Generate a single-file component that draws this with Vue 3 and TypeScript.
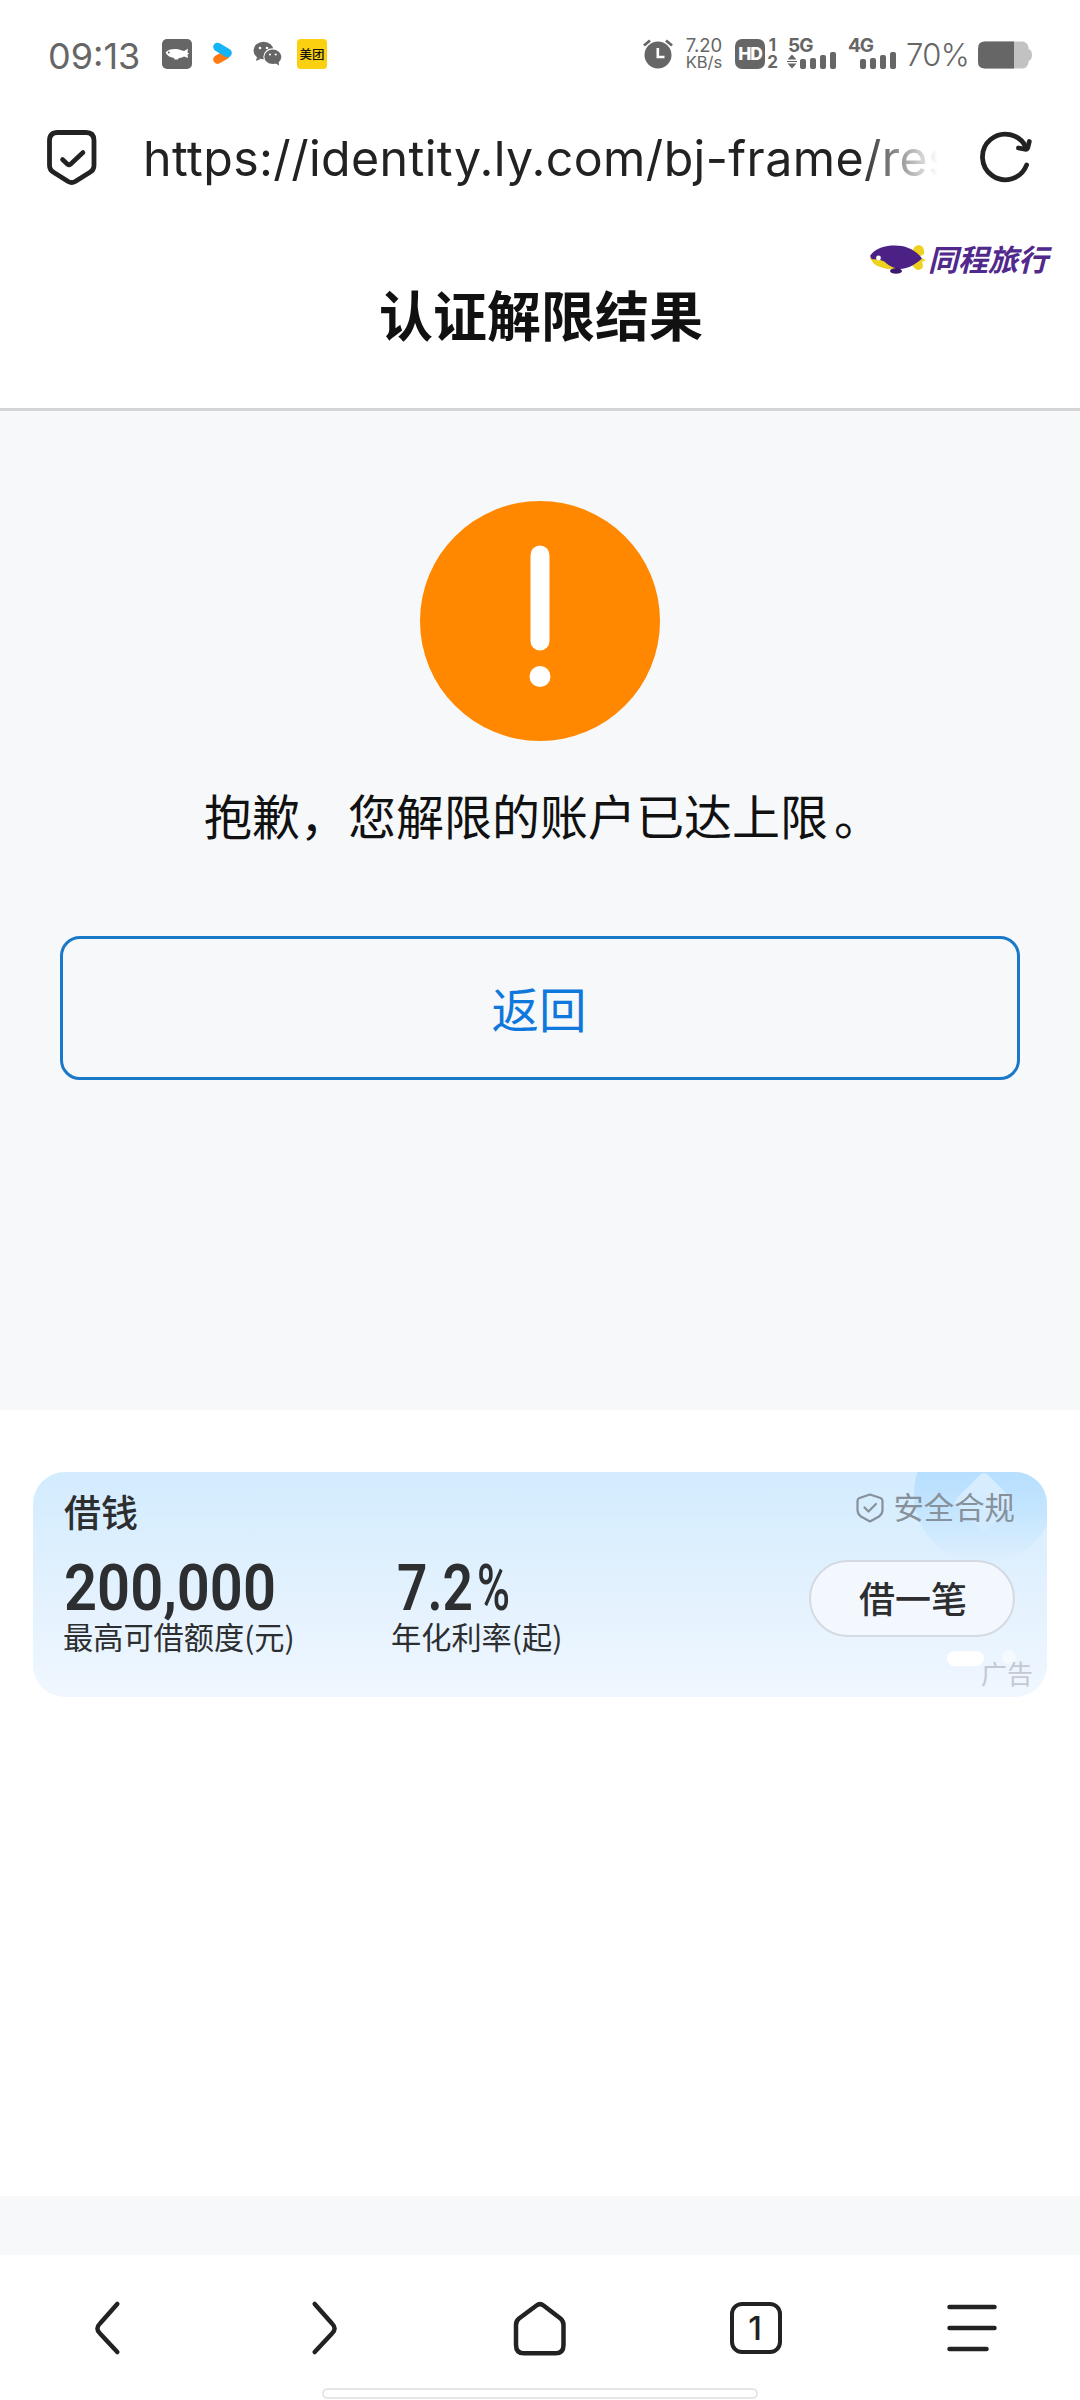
<script setup lang="ts">
import { ref } from 'vue'

interface Quota {
  value: string
  unit?: string
  label: string
  width: number
}

const url = 'https://identity.ly.com/bj-frame/res'
const tabCount = ref<number>(1)
const quotas: Quota[] = [
  { value: '200,000', label: '最高可借额度(元)', width: 212 },
  { value: '7.2', unit: '%', label: '年化利率(起)', width: 76 },
]
const bars = [10, 11, 14, 17]
</script>

<template>
  <div class="screen">
    <div class="status">
      <span class="time">09:13</span>
      <svg class="i-app" width="30" height="30" viewBox="0 0 30 30">
        <rect width="30" height="30" rx="5" fill="#666" />
        <path d="M3.500 13.500C6 10.500 11 9.500 16 10.200L22 12L26 9.800L25.500 13.500L27 14.500L25.500 15.500L26 19L22 17.500C20 18.500 18 19 16.500 19.200L16 20.500H12.500L12 19C8 18.500 5 16.500 3.500 13.500Z" fill="#fff" />
        <circle cx="6.800" cy="13.500" r="1" fill="#666" />
      </svg>
      <svg class="i-play" width="20" height="24" viewBox="0 0 20 24">
        <path d="M4.500 17.500L12.500 13" stroke="#ff7a12" stroke-width="8.600" stroke-linecap="round" />
        <path d="M4.500 5L14.500 11" stroke="#14b4f5" stroke-width="8.600" stroke-linecap="round" />
      </svg>
      <svg class="i-wechat" width="30" height="26" viewBox="0 0 30 26">
        <path d="M4 16L3 20L7.500 18Z" fill="#666" />
        <ellipse cx="10.500" cy="9.500" rx="10" ry="8.700" fill="#666" />
        <ellipse cx="19.800" cy="15.800" rx="9.500" ry="8.500" fill="#fff" />
        <ellipse cx="19.800" cy="15.800" rx="8.500" ry="7.300" fill="#666" />
        <path d="M22 22L26 24.500L25.500 19Z" fill="#666" />
        <g fill="#fff"><circle cx="7" cy="7" r="1.300" /><circle cx="14" cy="7" r="1.300" /><circle cx="17" cy="13.500" r="1.100" /><circle cx="22.700" cy="13.500" r="1.100" /></g>
      </svg>
      <span class="meituan">美团</span>
      <span class="grow"></span>
      <svg class="i-alarm" width="30" height="30" viewBox="0 0 30 30">
        <circle cx="15" cy="16" r="13.500" fill="#666" />
        <path d="M1 6.500L7 1.500M23 1.500L29 6.500" stroke="#666" stroke-width="2.800" />
        <path d="M14.800 9V18H21.500" fill="none" stroke="#fff" stroke-width="2.600" />
      </svg>
      <span class="speed"><span>7.20</span><span>KB/s</span></span>
      <span class="hd">HD</span>
      <span class="sims"><span>1</span><span>2</span></span>
      <span class="signal s5">
        <b>5G</b>
        <span class="bars">
          <svg width="10" height="17" viewBox="0 0 10 17"><path d="M0.500 6.500L5 1.500L9.500 6.500ZM0.500 10.500L5 15.500L9.500 10.500ZM0 8H10V9H0Z" fill="#666" /></svg>
          <i v-for="(h, n) in bars" :key="n" :style="{ height: h + 'px' }"></i>
        </span>
      </span>
      <span class="signal s4">
        <b>4G</b>
        <span class="bars">
          <i v-for="(h, n) in bars" :key="n" :style="{ height: h + 'px' }"></i>
        </span>
      </span>
      <span class="percent">70%</span>
      <svg class="i-battery" width="54" height="28" viewBox="0 0 54 28">
        <path d="M7 0.500H44Q49 0.500 50.500 6V8Q54 9 54 14Q54 19 50.500 20V22Q49 27.500 44 27.500H7Q0 27.500 0 20.500V7.500Q0 0.500 7 0.500Z" fill="#c2c2c2" />
        <path d="M7 0.500H36V27.500H7Q0 27.500 0 20.500V7.500Q0 0.500 7 0.500Z" fill="#666" />
      </svg>
    </div>

    <div class="address">
      <svg class="i-shield" width="52" height="58" viewBox="0 0 52 58" fill="none" stroke="#222" stroke-linecap="round" stroke-linejoin="round">
        <path d="M11.500 4.500H40Q48 4.500 48 12.500V37Q48 42 44 44.200L29.200 53.500Q25.700 55.500 22.200 53.500L7.500 44.200Q3.500 42 3.500 37V12.500Q3.500 4.500 11.500 4.500Z" stroke-width="4.800" />
        <path d="M16.500 31.500L21.500 36.200Q23 37.500 24.500 36.200L37 24.500" stroke-width="4.600" />
      </svg>
      <span class="url">{{ url }}</span>
      <svg class="i-reload" width="56" height="56" viewBox="0 0 56 56" fill="none" stroke="#222" stroke-width="4.800" stroke-linecap="round" stroke-linejoin="round">
        <path d="M48.600 36A22.800 22.800 0 1 1 47.800 18" />
        <path d="M51.300 12.500L49.800 18.500Q49.200 20.500 47 20.200L40.500 19" />
      </svg>
    </div>

    <header class="head">
      <h1>认证解限结果</h1>
      <div class="brand">
        <svg width="58" height="32" viewBox="0 0 58 32">
          <path d="M44 9Q46 2 51 2Q57 3 56 11L51 14L58 17L54 19Q57 26 50 27Q46 26 43 20Z" fill="#efd21f" />
          <path d="M2 13C7 5 17 2.500 27 2.500C37 2.500 47 6 54 15.500C44 25 34 27 24 26C13 25 5 21 2 13Z" fill="#4b2186" />
          <path d="M2 13Q3 22 15 25Q22 27 28 25.500Q20 22.500 17 19Q13 16 2 16Z" fill="#efd21f" />
          <circle cx="10.500" cy="15" r="2.400" fill="#fff" />
          <ellipse cx="28" cy="28" rx="6" ry="2.800" fill="#3b1a70" />
        </svg>
        <span>同程旅行</span>
      </div>
    </header>

    <main class="result">
      <svg class="warn" width="240" height="240" viewBox="0 0 240 240">
        <circle cx="120" cy="120" r="120" fill="#ff8800" />
        <rect x="110.500" y="44.500" width="19" height="105" rx="9.500" fill="#fff" />
        <circle cx="120" cy="175.500" r="10.500" fill="#fff" />
      </svg>
      <p>抱歉，您解限的账户已达上限<span class="stop">。</span></p>
      <button type="button">返回</button>
    </main>

    <section class="promo">
      <div class="card">
        <svg class="decor" width="140" height="96" viewBox="0 0 140 96">
          <defs>
            <linearGradient id="disc" x1="0" y1="0" x2="0" y2="1">
              <stop offset="0.300" stop-color="#b5deff" />
              <stop offset="1" stop-color="#b5deff" stop-opacity="0" />
            </linearGradient>
            <linearGradient id="gem" x1="0" y1="0" x2="0" y2="1">
              <stop offset="0" stop-color="#d8eeff" />
              <stop offset="1" stop-color="#d0eaff" />
            </linearGradient>
          </defs>
          <circle cx="77" cy="22" r="70" fill="url(#disc)" />
          <path d="M73 3Q77 -1 81 3L104 26Q108 30 104 34L81 57Q77 61 73 57L50 34Q46 30 50 26Z" fill="url(#gem)" />
        </svg>
        <div class="left">
          <h2>借钱</h2>
          <div class="quotas">
            <div v-for="q in quotas" :key="q.label" class="quota">
              <svg class="num" width="220" height="62" viewBox="0 0 220 62">
                <text x="0" y="52" :textLength="q.width" lengthAdjust="spacingAndGlyphs">{{ q.value }}</text>
                <text v-if="q.unit" class="unit" x="80" y="52" textLength="33" lengthAdjust="spacingAndGlyphs">{{ q.unit }}</text>
              </svg>
              <span class="label">{{ q.label }}</span>
            </div>
          </div>
        </div>
        <div class="right">
          <div class="safe">
            <svg width="28" height="30" viewBox="0 0 28 30" fill="none" stroke="#87919b" stroke-width="2.200" stroke-linecap="round" stroke-linejoin="round">
              <path d="M14 1.500L24.500 5Q26.500 5.800 26.500 8V17Q26.500 21 23 23.500L14 28.500L5 23.500Q1.500 21 1.500 17V8Q1.500 5.800 3.500 5Z" />
              <path d="M8.500 14.500L12.500 18.500L20 11" />
            </svg>
            <span>安全合规</span>
          </div>
          <span class="borrow">借一笔</span>
        </div>
        <span class="pill"></span>
        <span class="dot"></span>
        <span class="ad">广告</span>
      </div>
    </section>

    <div class="strip"></div>

    <nav class="nav">
      <svg width="60" height="60" viewBox="0 0 60 60"><path d="M39.300 6L22 25.500Q16.800 30.500 22 35.500L39.300 54" /></svg>
      <svg width="60" height="60" viewBox="0 0 60 60"><path d="M20.700 6L38 25.500Q43.200 30.500 38 35.500L20.700 54" /></svg>
      <svg width="60" height="60" viewBox="0 0 60 60"><path d="M26.500 7.500Q30 4.800 33.500 7.500L50.500 20.500Q53.500 22.900 53.500 27V47Q53.500 55.300 45.500 55.300H14Q6 55.300 6 47V27Q6 22.900 9 20.500Z" /></svg>
      <span class="tabs">{{ tabCount }}</span>
      <svg width="60" height="60" viewBox="0 0 60 60"><path d="M7.500 9H52.500M7.500 30H52.500M7.500 51H44.500" /></svg>
      <span class="gesture"></span>
    </nav>
  </div>
</template>

<style>
body {
  margin: 0;
  background: #fff;
}
</style>

<style scoped>
.screen {
  width: 1080px;
  height: 2400px;
  display: flex;
  flex-direction: column;
  overflow: hidden;
  background: #fff;
  color: #111;
  font-family: Inter, "Noto Sans CJK SC", sans-serif;
}
svg {
  display: block;
  flex: none;
}
.status {
  flex: none;
  height: 108px;
  box-sizing: border-box;
  padding: 0 48px;
  display: flex;
  align-items: center;
  color: #666;
}
.time {
  width: 92px;
  font-size: 36px;
  line-height: 40px;
  padding-top: 3px;
  white-space: nowrap;
}
.i-app { margin-left: 22px; }
.i-play { margin-left: 21px; }
.i-wechat { margin-left: 20px; }
.meituan {
  flex: none;
  margin-left: 14px;
  width: 30px;
  height: 30px;
  border-radius: 4px;
  background: #fbd010;
  color: #111;
  font: 500 12.500px/29px "Noto Sans CJK SC", sans-serif;
  text-align: center;
  white-space: nowrap;
}
.grow { flex: 1; }
.i-alarm { margin-right: 12px; }
.speed {
  width: 38px;
  display: flex;
  flex-direction: column;
  align-items: center;
  font-size: 18.500px;
  line-height: 17px;
  margin-right: 12px;
}
.speed span:last-child { font-size: 16.500px; }
.hd {
  width: 30px;
  height: 30px;
  border-radius: 7px;
  background: #666;
  color: #fff;
  font-size: 17.500px;
  font-weight: 800;
  line-height: 30px;
  text-align: center;
  letter-spacing: -1px;
  margin-right: 2px;
}
.sims {
  width: 11px;
  display: flex;
  flex-direction: column;
  align-items: center;
  font-size: 17px;
  font-weight: 700;
  line-height: 17px;
  margin-right: 10px;
}
.signal {
  position: relative;
  height: 30px;
  display: flex;
  align-items: flex-end;
  justify-content: flex-end;
}
.signal b {
  position: absolute;
  left: 0;
  top: 0;
  font-size: 19px;
  font-weight: 700;
  line-height: 14px;
  letter-spacing: -1px;
}
.s5 { width: 48px; margin-right: 12px; }
.s4 { width: 48px; margin-right: 10px; }
.bars {
  display: flex;
  align-items: flex-end;
  gap: 4px;
}
.bars svg { margin-right: -1px; margin-bottom: -1px; }
.bars i {
  width: 6px;
  border-radius: 2px;
  background: #666;
}
.percent {
  width: 62px;
  font-size: 31px;
  font-weight: 300;
  line-height: 34px;
  letter-spacing: -0.600px;
  margin-right: 10px;
  padding-top: 2px;
  white-space: nowrap;
}
.i-battery { margin-top: 2px; }

.address {
  flex: none;
  height: 98px;
  box-sizing: border-box;
  padding: 0 46px;
  display: flex;
  align-items: center;
}
.url {
  width: 800px;
  margin-left: 45px;
  margin-right: 35px;
  padding-top: 3px;
  overflow: hidden;
  white-space: nowrap;
  font-size: 48.300px;
  font-weight: 400;
  line-height: 64px;
  letter-spacing: 0.400px;
  color: #222;
  -webkit-mask-image: linear-gradient(90deg, #000 715px, transparent 795px);
  mask-image: linear-gradient(90deg, #000 715px, transparent 795px);
}

.head {
  position: relative;
  flex: none;
  height: 205px;
  box-sizing: border-box;
  border-bottom: 3px solid #d5d5d5;
  padding: 74px 0 0 2px;
}
.head h1 {
  margin: 0;
  text-align: center;
  font: 700 54px/68px "Noto Sans CJK SC", sans-serif;
}
.brand {
  position: absolute;
  right: 32px;
  top: 37px;
  display: flex;
  align-items: center;
  gap: 2px;
  color: #51298c;
}
.brand span {
  font: italic 700 30px/30px "Noto Sans CJK SC", sans-serif;
  padding-bottom: 2px;
}

.result {
  flex: none;
  height: 999px;
  box-sizing: border-box;
  padding: 90px 60px 0;
  background: #f6f8fa;
  display: flex;
  flex-direction: column;
  align-items: center;
}
.result p {
  margin: 41px 0 0;
  font: 400 48px/64px "Noto Sans CJK SC", sans-serif;
  white-space: nowrap;
}
.stop {
  margin: 0 -6px 0 6px;
}
.result button {
  margin: 90px 0 0;
  padding: 0 2px 0 0;
  width: 960px;
  height: 144px;
  box-sizing: border-box;
  border: 3px solid #1a78c8;
  border-radius: 20px;
  background: transparent;
  color: #0f78dc;
  font: 400 47.500px/64px "Noto Sans CJK SC", sans-serif;
}

.promo {
  flex: none;
  height: 786px;
  box-sizing: border-box;
  padding: 62px 33px 0;
}
.card {
  position: relative;
  height: 225px;
  box-sizing: border-box;
  border-radius: 32px;
  overflow: hidden;
  background: linear-gradient(180deg, #d2ecfe 0%, #e2f1fe 50%, #f0f7ff 100%);
  display: flex;
  justify-content: space-between;
  padding: 0 32px 0 30px;
  color: #2c2e30;
  font-family: "Noto Sans CJK SC", sans-serif;
}
.decor {
  position: absolute;
  right: 0;
  top: 0;
}
.left { padding-top: 16px; }
.card h2 {
  margin: 0 0 0 1px;
  font-size: 37px;
  font-weight: 500;
  line-height: 46px;
}
.quotas {
  display: flex;
}
.quota:first-child { width: 328px; }
.quota {
  display: flex;
  flex-direction: column;
}
.num {
  margin-top: 24px;
  margin-left: 1px;
  overflow: visible;
}
.quota:last-child .num { margin-left: 6px; }
.num text {
  font: 600 65px Roboto, sans-serif;
  fill: #2c2e30;
}
.num .unit { font-weight: 500; }
.label {
  margin-top: -2px;
  font-size: 30.200px;
  line-height: 36px;
  white-space: nowrap;
}
.right {
  position: relative;
  display: flex;
  flex-direction: column;
  align-items: flex-end;
  padding-top: 16px;
}
.safe {
  display: flex;
  align-items: center;
  gap: 9px;
  color: #87919b;
  font-size: 30.400px;
  line-height: 36px;
  padding-bottom: 2px;
}
.safe svg { margin-top: 4px; }
.borrow {
  margin-top: 34px;
  width: 206px;
  height: 77px;
  box-sizing: border-box;
  border: 2px solid #d3dae2;
  border-radius: 39px;
  background: #f3f8ff;
  padding-left: 2px;
  text-align: center;
  font-size: 36px;
  font-weight: 500;
  line-height: 70px;
}
.pill {
  position: absolute;
  left: 914px;
  top: 179px;
  width: 37px;
  height: 15px;
  border-radius: 8px;
  background: #fff;
}
.dot {
  position: absolute;
  left: 969px;
  top: 178px;
  width: 14px;
  height: 14px;
  border-radius: 50%;
  background: #f5faff;
}
.ad {
  position: absolute;
  right: 14px;
  bottom: 8px;
  color: #c5c8d0;
  font-size: 26px;
  line-height: 32px;
}

.strip {
  flex: none;
  height: 59px;
  background: #f6f8fa;
}
.nav {
  position: relative;
  flex: 1;
  display: grid;
  grid-template-columns: repeat(5, 216px);
  justify-items: center;
  align-items: start;
  padding-top: 43px;
}
.nav svg {
  fill: none;
  stroke: #222;
  stroke-width: 4.500px;
  stroke-linecap: round;
  stroke-linejoin: round;
}
.tabs {
  margin-top: 4px;
  width: 52px;
  height: 52px;
  box-sizing: border-box;
  border: 4px solid #222;
  border-radius: 12px;
  padding-right: 2px;
  text-align: center;
  font-size: 33px;
  font-weight: 500;
  line-height: 44px;
  color: #222;
}
.gesture {
  position: absolute;
  left: 322px;
  bottom: 1px;
  width: 436px;
  height: 11px;
  box-sizing: border-box;
  border: 2px solid #e6e6e6;
  border-radius: 6px;
  background: #fff;
}
</style>
